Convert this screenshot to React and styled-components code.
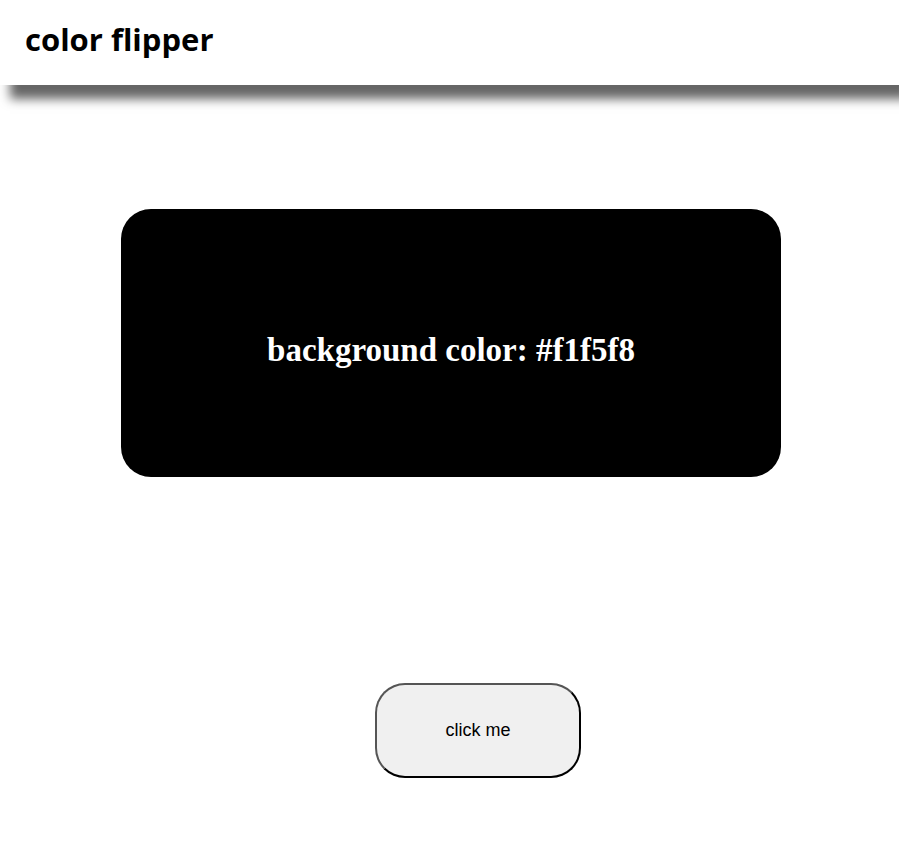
import React, { useState } from 'react';
import styled, { createGlobalStyle } from 'styled-components';

const GlobalStyle = createGlobalStyle`
  html, body {
    margin: 0;
    padding: 0;
    background: #fff;
  }
`;

const Header = styled.header`
  height: 85px;
  display: flex;
  align-items: center;
  padding-left: 25px;
  background: #fff;
  box-shadow: 10px 14px 10px #666;
  position: relative;
  z-index: 1;
`;

const Title = styled.h1`
  margin: 0 0 8px;
  font-family: "Open Sans", "Noto Sans", sans-serif;
  font-weight: 700;
  font-size: 31px;
  color: #000;
`;

const Main = styled.main`
  display: flex;
  flex-direction: column;
  align-items: flex-start;
  padding-top: 124px;
`;

const ColorBox = styled.div`
  margin-left: 121px;
  width: 660px;
  height: 268px;
  border-radius: 30px;
  background: ${(p) => p.$bg};
  display: flex;
  align-items: center;
  justify-content: center;
`;

const Label = styled.h2`
  margin: 14px 0 0 0;
  font-family: "Liberation Serif", "Times New Roman", serif;
  font-weight: 700;
  font-size: 33px;
  color: #fff;
`;

const FlipButton = styled.button`
  margin: 206px 0 0 375px;
  width: 206px;
  height: 95px;
  border-radius: 30px;
  border: 2px solid;
  border-color: #555 #000 #000 #555;
  background: #f0f0f0;
  font-family: "Liberation Sans", Arial, sans-serif;
  font-size: 18px;
  color: #000;
  cursor: pointer;
`;

const colors = ['#f1f5f8', '#ff6b6b', '#4ecdc4', '#ffe66d', '#1a535c'];

export default function App() {
  const [idx, setIdx] = useState(0);
  return (
    <>
      <GlobalStyle />
      <Header>
        <Title>color flipper</Title>
      </Header>
      <Main>
        <ColorBox $bg="#000">
          <Label>background color: {colors[idx]}</Label>
        </ColorBox>
        <FlipButton onClick={() => setIdx((idx + 1) % colors.length)}>click me</FlipButton>
      </Main>
    </>
  );
}
